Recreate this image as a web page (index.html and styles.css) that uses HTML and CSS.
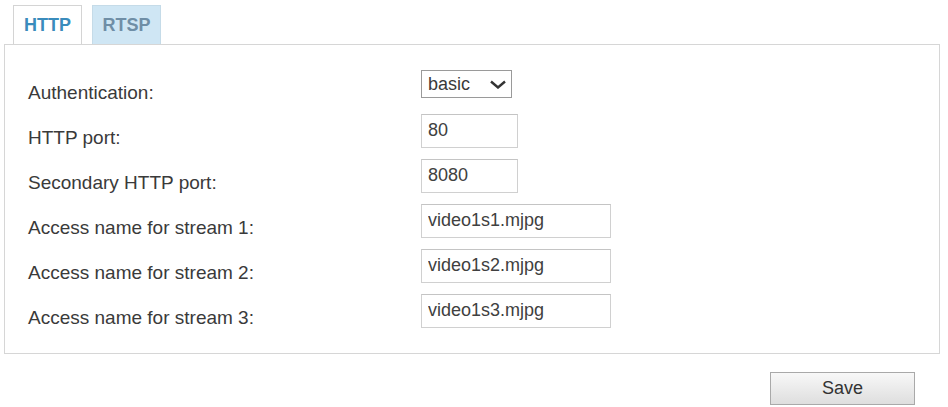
FILE: index.html
```html
<!DOCTYPE html>
<html lang="en">
  <head>
    <meta charset="UTF-8"/>
    <meta name="viewport" content="width=device-width, initial-scale=1.0">
    <link rel="stylesheet" href="styles.css">
    <title>Streaming settings</title>
  </head>
  <body>
    <div class="page">
      <div class="tabBar">
        <div class="tab tab_active">HTTP</div>
        <div class="tab tab_inactive">RTSP</div>
      </div>
      <div class="panel">
        <div class="formRow formRow_first">
          <label class="formRow_label">Authentication:</label>
          <div class="selectWrap">
            <select class="formSelect">
              <option>basic</option>
              <option>digest</option>
            </select>
            <svg class="selectWrap_arrow" width="18" height="9" viewBox="0 0 18 9">
              <path d="M2 1.5 L9 7.5 L16 1.5" fill="none" stroke="#333" stroke-width="2.4"/>
            </svg>
          </div>
        </div>
        <div class="formRow">
          <label class="formRow_label">HTTP port:</label>
          <input class="formInput formInput_short" type="text" value="80"/>
        </div>
        <div class="formRow">
          <label class="formRow_label">Secondary HTTP port:</label>
          <input class="formInput formInput_short" type="text" value="8080"/>
        </div>
        <div class="formRow">
          <label class="formRow_label">Access name for stream 1:</label>
          <input class="formInput formInput_long" type="text" value="video1s1.mjpg"/>
        </div>
        <div class="formRow">
          <label class="formRow_label">Access name for stream 2:</label>
          <input class="formInput formInput_long" type="text" value="video1s2.mjpg"/>
        </div>
        <div class="formRow">
          <label class="formRow_label">Access name for stream 3:</label>
          <input class="formInput formInput_long" type="text" value="video1s3.mjpg"/>
        </div>
      </div>
      <div class="actions">
        <button class="saveButton" type="button">Save</button>
      </div>
    </div>
  </body>
</html>
```

FILE: styles.css
```css
body {
  margin: 0;
  background-color: #ffffff;
  font-family: "Liberation Sans", Arial, sans-serif;
  color: #353535;
}
.page {
  padding: 5px 8px 0 4px;
}
.tabBar {
  display: flex;
  gap: 10px;
  margin-left: 9px;
}
  .tab {
    width: 67px;
    height: 38px;
    border: 1px solid #d4d4d4;
    border-bottom: none;
    font-size: 18px;
    font-weight: bold;
    line-height: 38px;
    text-align: center;
  }
  .tab_active {
    background-color: #ffffff;
    color: #3a8cbc;
  }
  .tab_inactive {
    background-color: #cfe6f4;
    border-color: #c5dbe8;
    color: #6f8ea6;
  }
.panel {
  border: 1px solid #d6d6d6;
  padding: 25px 0 25px 23px;
  display: flex;
  flex-direction: column;
  gap: 11px;
}
  .formRow {
    display: flex;
    align-items: flex-end;
  }
  .formRow_first {
    margin-bottom: 5px;
  }
    .formRow_label {
      width: 393px;
      font-size: 19px;
      line-height: 21px;
      color: #3a3a3a;
    }
    .formRow_first .formRow_label {
      margin-bottom: -5px;
    }
    .selectWrap {
      position: relative;
      width: 91px;
      height: 28px;
    }
      .formSelect {
        appearance: none;
        -webkit-appearance: none;
        box-sizing: border-box;
        width: 91px;
        height: 28px;
        margin: 0;
        padding: 0 0 0 6px;
        border: 1px solid #9a9a9a;
        border-radius: 0;
        background-color: #ffffff;
        font-family: "Liberation Sans", Arial, sans-serif;
        font-size: 18px;
        color: #3a3a3a;
      }
      .selectWrap_arrow {
        position: absolute;
        top: 10px;
        left: 68px;
        pointer-events: none;
      }
    .formInput {
      box-sizing: border-box;
      height: 34px;
      margin: 0;
      padding: 0 0 1px 6px;
      border: 1px solid #d0d0d0;
      border-top-color: #c4c4c4;
      font-family: "Liberation Sans", Arial, sans-serif;
      font-size: 18px;
      color: #404040;
    }
    .formInput_short {
      width: 97px;
    }
    .formInput_long {
      width: 190px;
    }
.actions {
  display: flex;
  justify-content: flex-end;
  padding: 18px 25px 0 0;
}
  .saveButton {
    width: 145px;
    height: 33px;
    border: 1px solid #a9a9a9;
    border-radius: 0;
    background: linear-gradient(#f8f8f8, #dedede);
    font-family: "Liberation Sans", Arial, sans-serif;
    font-size: 18px;
    color: #333333;
  }
```
